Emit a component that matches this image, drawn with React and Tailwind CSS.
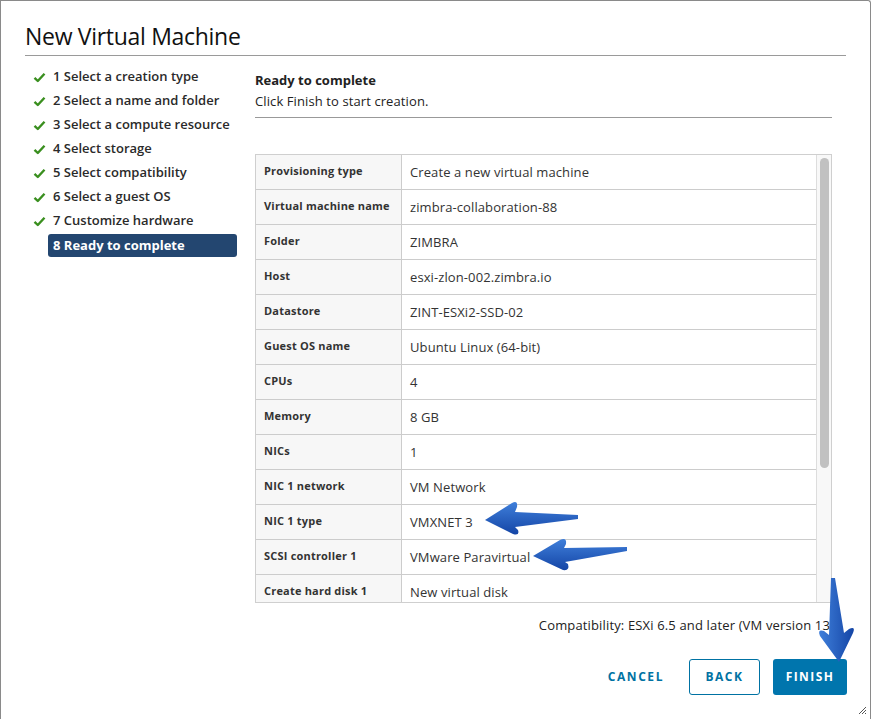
import React from 'react';

const STEPS = [
  '1 Select a creation type',
  '2 Select a name and folder',
  '3 Select a compute resource',
  '4 Select storage',
  '5 Select compatibility',
  '6 Select a guest OS',
  '7 Customize hardware',
];

const ROWS = [
  ['Provisioning type', 'Create a new virtual machine'],
  ['Virtual machine name', 'zimbra-collaboration-88'],
  ['Folder', 'ZIMBRA'],
  ['Host', 'esxi-zlon-002.zimbra.io'],
  ['Datastore', 'ZINT-ESXi2-SSD-02'],
  ['Guest OS name', 'Ubuntu Linux (64-bit)'],
  ['CPUs', '4'],
  ['Memory', '8 GB'],
  ['NICs', '1'],
  ['NIC 1 network', 'VM Network'],
  ['NIC 1 type', 'VMXNET 3'],
  ['SCSI controller 1', 'VMware Paravirtual'],
  ['Create hard disk 1', 'New virtual disk'],
];

function Check() {
  return (
    <svg width="13" height="11" viewBox="0 0 13 11" className="shrink-0">
      <path d="M1.5 5.8 L4.8 9 L11.5 1.8" fill="none" stroke="#3a8f1f" strokeWidth="2.4" strokeLinejoin="round"/>
    </svg>
  );
}

// annotation arrows drawn over the screenshot
function Arrows() {
  return (
    <svg className="absolute left-0 top-0 pointer-events-none" width="872" height="719" viewBox="0 0 872 719">
      <defs>
        <linearGradient id="ag" x1="0" y1="0" x2="0" y2="1">
          <stop offset="0" stopColor="#3f7fda"/>
          <stop offset="1" stopColor="#1445a6"/>
        </linearGradient>
        <linearGradient id="agv" x1="0" y1="0" x2="1" y2="0">
          <stop offset="0" stopColor="#3f7fda"/>
          <stop offset="1" stopColor="#1445a6"/>
        </linearGradient>
      </defs>
      <path d="M485 520 L512 503 Q518 500 517 507 L515 512 L578 515 L578 519 L515 527 L518 530 Q520 536 513 534 Z" fill="url(#ag)"/>
      <path d="M533 556 L560 540 Q567 537 566 544 L564 548 L627 547 L627 551 L565 562 L568 564 Q570 571 563 570 Z" fill="url(#ag)"/>
      <path d="M831 578 L835 578 L844 633 L849 629 Q856 626 853 633 L839 662 L820 636 Q817 629 824 631 L829 635 Z" fill="url(#agv)"/>
    </svg>
  );
}

export default function App() {
  return (
    <div className="relative w-[872px] h-[719px] bg-white" style={{fontFamily: '"Open Sans", "Liberation Sans", sans-serif'}}>
      <div className="w-[871px] h-[719px] border-l border-t border-r border-[#8a8a8a] rounded-tr-[3px] flex flex-col">
        <div className="mx-[24px] pt-[21px] pb-[5px] border-b border-[#9a9a9a]">
          <h1 className="text-[23px] leading-[28px] text-[#111] tracking-[-0.3px]">New Virtual Machine</h1>
        </div>
        <div className="flex flex-1">
          <div className="w-[230px] pl-[32px] pt-[9px] flex flex-col">
            {STEPS.map((s) => (
              <div key={s} className="flex items-center h-[24px] gap-[7px] text-[13px] font-semibold text-[#2a2a2a]">
                <Check/>
                <span>{s}</span>
              </div>
            ))}
            <div className="ml-[15px] mt-[1px] w-[189px] h-[23px] rounded-[3px] bg-[#234670] text-white text-[13px] font-bold flex items-center pl-[5px]">
              8 Ready to complete
            </div>
          </div>
          <div className="flex-1 pl-[24px] pr-[38px] flex flex-col">
            <div className="pt-[14px]">
              <div className="text-[13px] font-bold text-[#222] leading-[20px]">Ready to complete</div>
              <div className="text-[13px] text-[#222] leading-[22px] tracking-[0.1px]">Click Finish to start creation.</div>
            </div>
            <div className="mt-[5px] border-b border-[#999]"/>
            <div className="mt-[36px] h-[449px] border border-[#cfcfcf] flex overflow-hidden">
              <div className="flex-1 flex flex-col">
                {ROWS.map(([k, v]) => (
                  <div key={k} className="flex h-[35px] shrink-0 border-b border-[#cccccc]">
                    <div className="w-[146px] shrink-0 bg-[#f7f7f7] border-r border-[#cccccc] px-[8px] pt-[9px] text-[11px] font-bold text-[#333] leading-[14px] tracking-[0.2px]">{k}</div>
                    <div className="px-[8px] pt-[8px] text-[13px] text-[#333] leading-[18px] tracking-[0.1px]">{v}</div>
                  </div>
                ))}
              </div>
              <div className="w-[15px] shrink-0 bg-[#f8f8f8] border-l border-[#dddddd] pt-[3px] flex justify-center">
                <div className="w-[9px] h-[310px] rounded-full bg-[#c1c1c1]"/>
              </div>
            </div>
            <div className="mt-[13px] text-right text-[13px] text-[#222] leading-[18px] -mr-[2px] tracking-[0.15px]">
              Compatibility: ESXi 6.5 and later (VM version 13)
            </div>
          </div>
        </div>
        <div className="flex items-center justify-end gap-[13px] pr-[23px] pb-[24px]">
          <button className="h-[36px] px-[12px] text-[12px] font-bold tracking-[0.13em] text-[#0072a3]">CANCEL</button>
          <button className="h-[36px] w-[71px] rounded-[3px] border border-[#0072a3] text-[12px] font-bold tracking-[0.13em] text-[#0072a3]">BACK</button>
          <button className="h-[36px] w-[74px] rounded-[3px] bg-[#0075ad] text-[12px] font-bold tracking-[0.12em] text-white">FINISH</button>
        </div>
      </div>
      <svg className="absolute right-[5px] bottom-[4px]" width="9" height="9" viewBox="0 0 9 9">
        <path d="M8 1 L1 8 M8 4 L4 8 M8 7 L7 8" stroke="#555" strokeWidth="1"/>
      </svg>
      <Arrows/>
    </div>
  );
}
